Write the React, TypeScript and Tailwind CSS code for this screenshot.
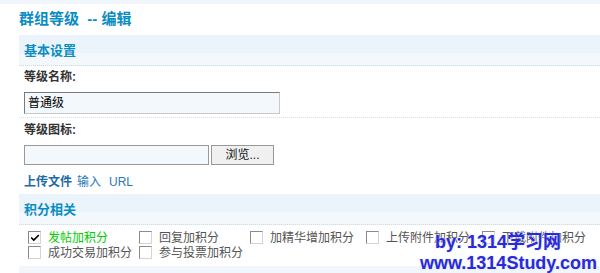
import { Check } from "lucide-react";

const FONT = "font-['Liberation_Sans','Noto_Sans_CJK_SC',sans-serif]";

function SectionHeader({ title }: { title: string }) {
  return (
    <div className="h-[31px] border-b border-dotted border-[#cfdbe7] bg-[linear-gradient(#ecf4fb_0,#ecf4fb_60%,#f3f8fc_60%,#f3f8fc_100%)] pl-[5px] flex items-center">
      <span className="text-[13px] font-bold text-[#0b8cc3] leading-none">{title}</span>
    </div>
  );
}

function Box({ checked }: { checked?: boolean }) {
  return (
    <span className="w-[13px] h-[13px] shrink-0 border border-[#8a8a8a] border-r-[#d4d4d4] border-b-[#d4d4d4] bg-white flex items-center justify-center">
      {checked ? <Check className="w-[10px] h-[10px] text-black" strokeWidth={4} /> : null}
    </span>
  );
}

const rows = [
  [
    { label: "发帖加积分", checked: true, w: "w-[111px]" },
    { label: "回复加积分", w: "w-[111px]" },
    { label: "加精华增加积分", w: "w-[116px]" },
    { label: "上传附件加积分", w: "w-[116px]" },
    { label: "下载附件加积分", w: "w-[110px]" },
  ],
  [
    { label: "成功交易加积分", w: "w-[111px]" },
    { label: "参与投票加积分", w: "w-[111px]" },
  ],
];

export default function App() {
  return (
    <div className={`relative w-[600px] h-[273px] overflow-hidden bg-white ${FONT}`}>
      <div className="h-[4px] bg-[#f0f6fb]" />
      <div className="h-[31px] pl-[19px] pt-[5px] text-[15px] leading-[20px] font-bold text-[#0b8cc3] whitespace-pre">
        群组等级  -- 编辑
      </div>

      <div className="ml-[19px]">
        <SectionHeader title="基本设置" />

        <div className="pl-[5px] border-b border-dotted border-[#d6e0ea]">
          <div className="h-[22px] flex items-center text-[12px] font-bold text-[#333]">等级名称:</div>
          <div className="pt-[4px] pb-[3px]">
            <div className="w-[256px] h-[22px] border border-[#7a7a7a] border-r-[#c8c8c8] border-b-[#c8c8c8] bg-[#f3f8fc] pl-[3px] flex items-center text-[12px] text-black">
              普通级
            </div>
          </div>
        </div>

        <div className="pl-[5px]">
          <div className="h-[23px] flex items-center text-[12px] font-bold text-[#333]">等级图标:</div>
          <div className="pt-[4px] flex gap-[2px]">
            <div className="w-[185px] h-[20px] border border-[#999] bg-[#f3f8fc]" />
            <div className="w-[63px] h-[20px] border border-[#999] bg-[#f0f0f0] flex items-center justify-center text-[12px] text-[#111]">
              浏览...
            </div>
          </div>
          <div className="h-[29px] pt-[10px] text-[12px] leading-[14px] flex">
            <span className="font-bold text-[#1e6aa3]">上传文件</span>
            <span className="ml-[5px] text-[#2a78b6]">输入</span>
            <span className="ml-[8px] text-[#2a78b6]">URL</span>
          </div>
        </div>

        <SectionHeader title="积分相关" />

        <div className="pl-[9px] pt-[5px] text-[12px] text-[#555]">
          {rows.map((row, i) => (
            <div key={i} className="h-[15px] flex items-center">
              {row.map((item) => (
                <div key={item.label} className={`${item.w} flex items-center gap-[7px] whitespace-nowrap`}>
                  <Box checked={item.checked} />
                  <span className={item.checked ? "text-[#00cc00]" : ""}>{item.label}</span>
                </div>
              ))}
            </div>
          ))}
        </div>
        <div className="mt-[6px] h-[10px] bg-[#f0f6fb]" />
      </div>

      {/* watermark overlay */}
      <div className="absolute left-[435px] top-[232px] text-[18px] font-bold leading-[20px] text-[#2a2ad8] [text-shadow:0_0_2px_#cfd8ff,0_0_1px_#fff] whitespace-pre">
        by: 1314学习网
      </div>
      <div className="absolute left-[420px] top-[253px] text-[18px] font-bold leading-[20px] text-[#2a2ad8] [text-shadow:0_0_2px_#cfd8ff,0_0_1px_#fff]">
        www.1314Study.com
      </div>
    </div>
  );
}
